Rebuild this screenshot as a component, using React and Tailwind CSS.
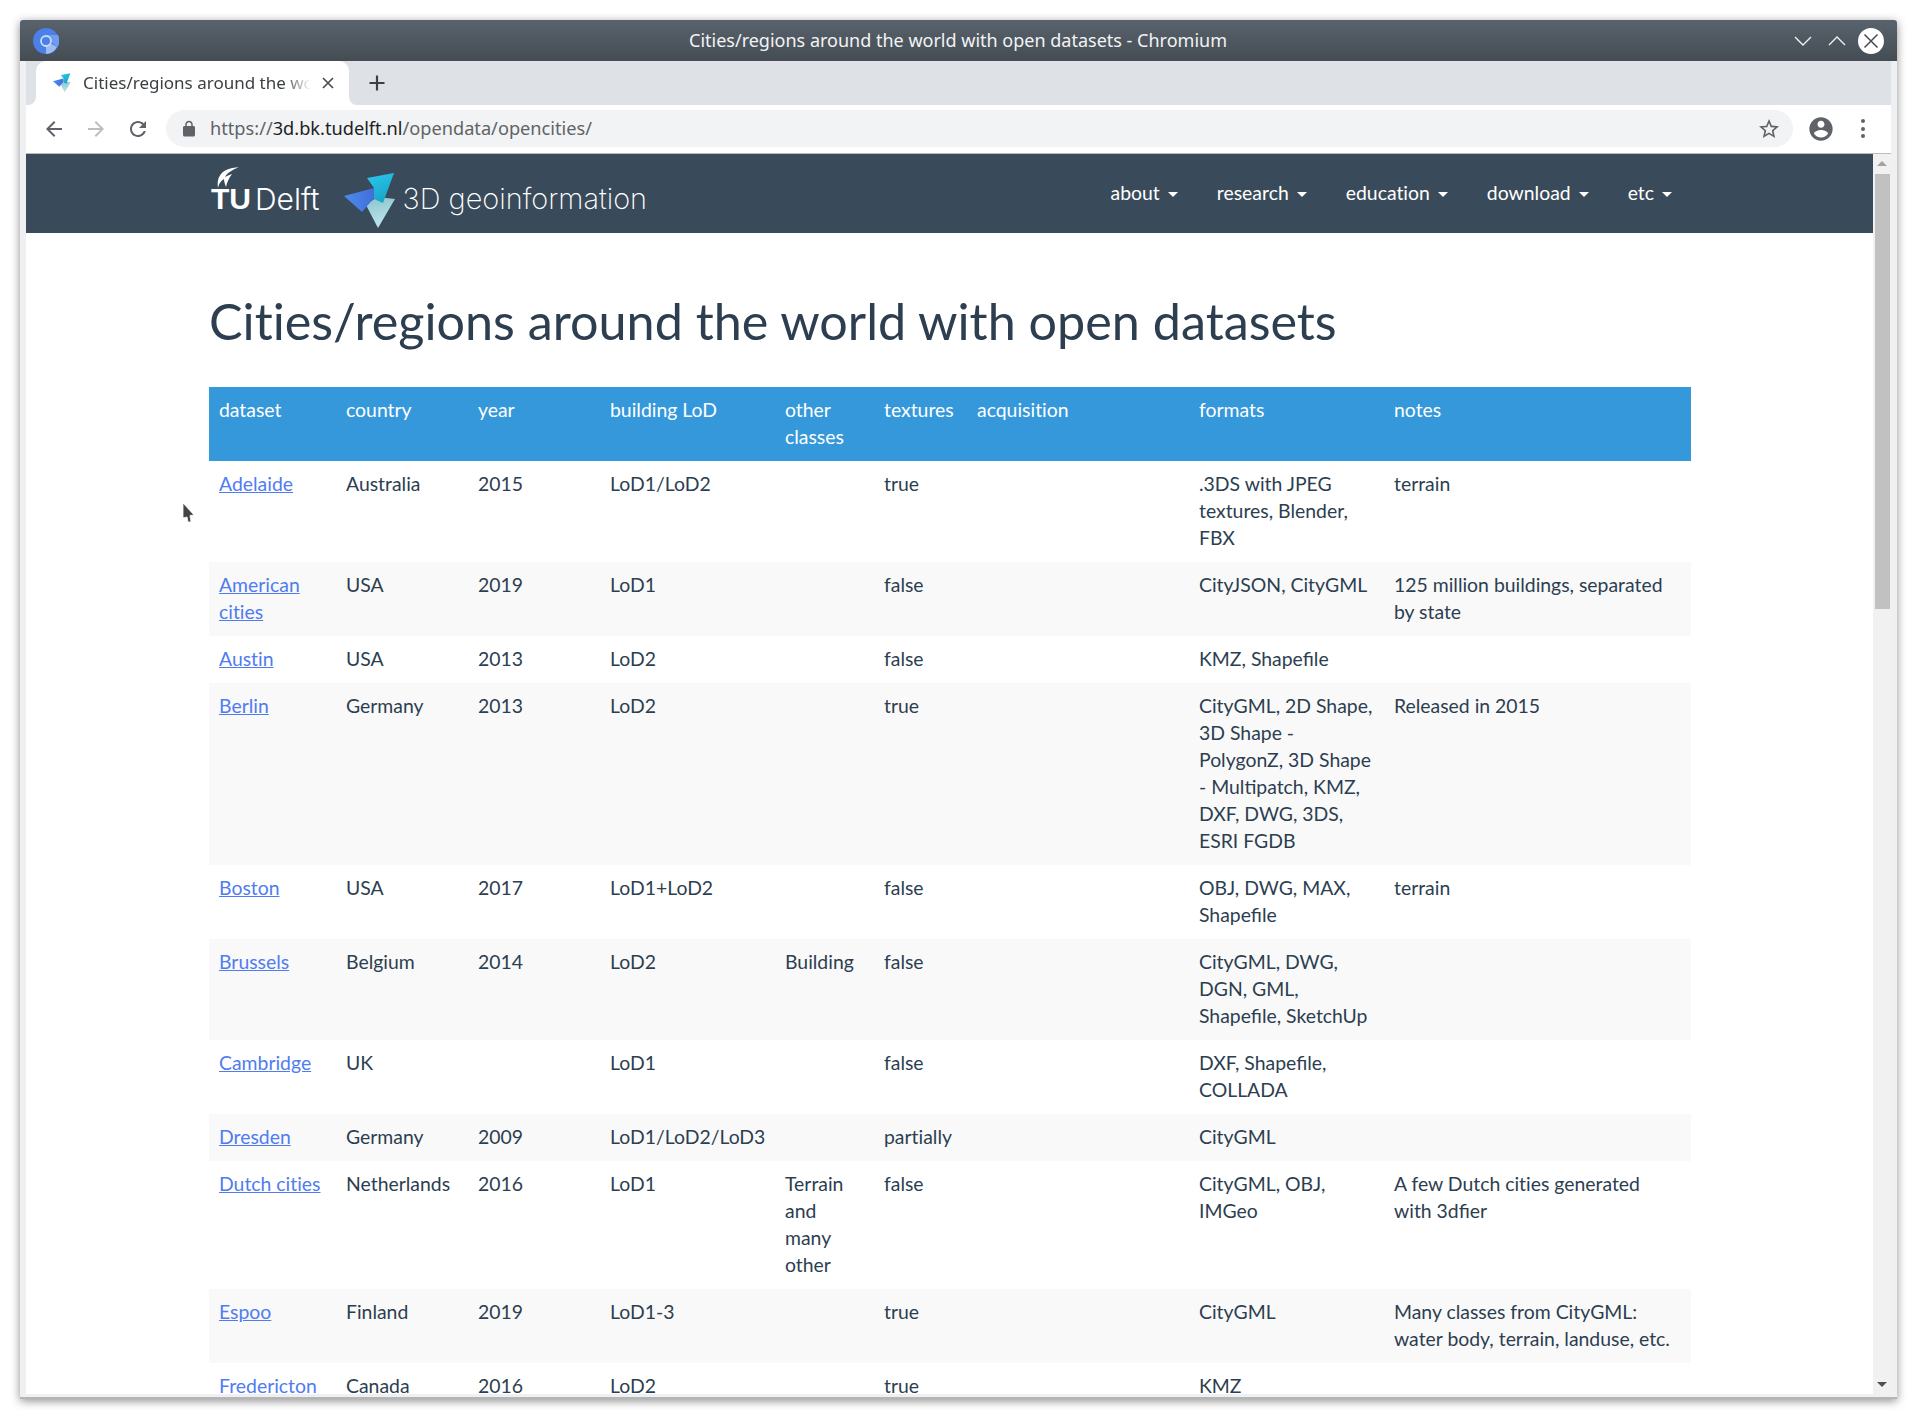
const columns = [127, 132, 132, 175, 99, 93, 222, 195, 307];

const headers = ["dataset", "country", "year", "building LoD", "other classes", "textures", "acquisition", "formats", "notes"];

const rows = [
  ["Adelaide", "Australia", "2015", "LoD1/LoD2", "", "true", "", ".3DS with JPEG textures, Blender, FBX", "terrain"],
  ["American cities", "USA", "2019", "LoD1", "", "false", "", "CityJSON, CityGML", "125 million buildings, separated by state"],
  ["Austin", "USA", "2013", "LoD2", "", "false", "", "KMZ, Shapefile", ""],
  ["Berlin", "Germany", "2013", "LoD2", "", "true", "", "CityGML, 2D Shape, 3D Shape - PolygonZ, 3D Shape - Multipatch, KMZ, DXF, DWG, 3DS, ESRI FGDB", "Released in 2015"],
  ["Boston", "USA", "2017", "LoD1+LoD2", "", "false", "", "OBJ, DWG, MAX, Shapefile", "terrain"],
  ["Brussels", "Belgium", "2014", "LoD2", "Building", "false", "", "CityGML, DWG, DGN, GML, Shapefile, SketchUp", ""],
  ["Cambridge", "UK", "", "LoD1", "", "false", "", "DXF, Shapefile, COLLADA", ""],
  ["Dresden", "Germany", "2009", "LoD1/LoD2/LoD3", "", "partially", "", "CityGML", ""],
  ["Dutch cities", "Netherlands", "2016", "LoD1", "Terrain and many other", "false", "", "CityGML, OBJ, IMGeo", <>A few Dutch cities generated with 3d<span className="[font-variant-ligatures:normal]">fier</span></>],
  ["Espoo", "Finland", "2019", "LoD1-3", "", "true", "", "CityGML", "Many classes from CityGML: water body, terrain, landuse, etc."],
  ["Fredericton", "Canada", "2016", "LoD2", "", "true", "", "KMZ", ""],
];

const navItems = ["about", "research", "education", "download", "etc"];

function MaterialIcon({ d, className }) {
  return (
    <svg viewBox="0 0 24 24" className={className} fill="currentColor">
      <path d={d} />
    </svg>
  );
}

function ChromiumIcon() {
  return (
    <svg viewBox="0 0 26 26" className="w-[26px] h-[26px] shrink-0">
      <circle cx="13" cy="13" r="13" fill="#4a80e8" />
      <path d="M13 13 L24 19 A13 13 0 0 1 13 26 Z" fill="#9dbcf2" />
      <path d="M13 7 H25 A13 13 0 0 1 24.2 19.5 L18 13 Z" fill="#6f9cee" />
      <circle cx="13" cy="13" r="5" fill="#4a80e8" stroke="#c9dbfa" strokeWidth="1.8" />
    </svg>
  );
}

function GeoLogo({ className, id }) {
  return (
    <svg viewBox="0 0 52 56" className={className}>
      <defs>
        <linearGradient id={`${id}a`} x1="0.2" y1="0" x2="0.7" y2="1">
          <stop offset="0" stopColor="#2bc5ee" />
          <stop offset="1" stopColor="#17a3c4" />
        </linearGradient>
        <linearGradient id={`${id}b`} x1="0" y1="0.5" x2="1" y2="0.4">
          <stop offset="0" stopColor="#4f8aec" />
          <stop offset="1" stopColor="#3f6fdc" />
        </linearGradient>
        <linearGradient id={`${id}c`} x1="0.4" y1="0" x2="0.6" y2="1">
          <stop offset="0" stopColor="#8fc6cf" />
          <stop offset="1" stopColor="#bfe8ef" />
        </linearGradient>
      </defs>
      <path d="M22 32 L33 24 L51 26 L34 55 Z" fill={`url(#${id}c)`} />
      <path d="M0 23 L30 15 L30 25 L18 39 Z" fill={`url(#${id}b)`} />
      <path d="M23 5 L50 0 L39 30 L30 26 L30 15 Z" fill={`url(#${id}a)`} />
    </svg>
  );
}

function Flame() {
  return (
    <svg viewBox="0 0 24 22" className="absolute left-[5px] top-[-17px] w-[24px] h-[22px]" fill="#ffffff">
      <path d="M23 0 C16 1 9 2 5 7 C2 11 1 15 2 21 C3 16 5 14 8 12 C8 15 9 17 10 20 C11 15 13 11 16 7 C13 8 11 9 9 10 C11 6 16 3 23 0 Z" />
    </svg>
  );
}

function Cursor() {
  return (
    <svg viewBox="0 0 14 22" className="absolute left-[156px] top-[348px] w-[14px] h-[22px]">
      <path d="M1 1 L12 13 L8 13.5 L9 20 L6 20 L5 15 L1 16 Z" fill="#454545" stroke="#ffffff" strokeWidth="0.8" />
    </svg>
  );
}

export default function App() {
  return (
    <div className="w-[1917px] h-[1420px] bg-white pt-[20px] pl-[20px] overflow-hidden">
      <div className="w-[1877px] h-[1379px] flex flex-col bg-[#eff0f1] rounded-t-[3px] shadow-[0_2px_10px_rgba(0,0,0,0.45)] border-b-[2px] border-b-[#b5b5b5] overflow-hidden">
        {/* title bar */}
        <div className="h-[41px] shrink-0 flex items-center relative px-[13px] bg-gradient-to-b from-[#59636d] to-[#444c53]">
          <ChromiumIcon />
          <div className="flex-1 text-center text-[18px] text-[#f2f3f4] pl-[63px] font-['Noto_Sans',sans-serif]">
            Cities/regions around the world with open datasets - Chromium
          </div>
          <div className="flex items-center">
            <svg viewBox="0 0 18 12" className="w-[18px] h-[12px] mr-[16px]" fill="none" stroke="#f0f0f0" strokeWidth="1.4">
              <path d="M1 2 L9 10 L17 2" />
            </svg>
            <svg viewBox="0 0 18 12" className="w-[18px] h-[12px] mr-[12px]" fill="none" stroke="#f0f0f0" strokeWidth="1.4">
              <path d="M1 10 L9 2 L17 10" />
            </svg>
            <svg viewBox="0 0 26 26" className="w-[26px] h-[26px]">
              <circle cx="13" cy="13" r="13" fill="#ffffff" />
              <path d="M6.5 6.5 L19.5 19.5 M19.5 6.5 L6.5 19.5" stroke="#444c53" strokeWidth="1.5" />
            </svg>
          </div>
        </div>

        {/* tab strip */}
        <div className="h-[44px] shrink-0 mx-[6px] bg-[#dee1e6] flex items-center">
          <div className="w-[10px] h-[44px] shrink-0 bg-white">
            <div className="h-full bg-[#dee1e6] rounded-br-[8px]" />
          </div>
          <div className="w-[313px] h-[44px] shrink-0 bg-white rounded-t-[10px] flex items-center pl-[17px] pr-[15px] font-['Noto_Sans',sans-serif]">
            <GeoLogo id="fav" className="w-[18px] h-[20px] shrink-0" />
            <div className="ml-[12px] w-[228px] overflow-hidden whitespace-nowrap text-[17px] text-[#3c4043] [mask-image:linear-gradient(to_right,black_88%,transparent)]">
              Cities/regions around the world with open datasets
            </div>
            <svg viewBox="0 0 12 12" className="ml-auto w-[12px] h-[12px]" fill="none" stroke="#4a4d51" strokeWidth="1.7">
              <path d="M1 1 L11 11 M11 1 L1 11" />
            </svg>
          </div>
          <div className="flex-1 h-[44px] bg-white">
            <div className="h-full bg-[#dee1e6] rounded-bl-[8px] flex items-center pl-[20px]">
              <svg viewBox="0 0 16 16" className="w-[16px] h-[16px]" fill="none" stroke="#3c4043" strokeWidth="2.2">
                <path d="M8 0.5 V15.5 M0.5 8 H15.5" />
              </svg>
            </div>
          </div>
        </div>

        {/* toolbar */}
        <div className="h-[49px] shrink-0 mx-[6px] bg-white border-b border-b-[#bcbcbc] flex items-center pb-[1px] font-['Noto_Sans',sans-serif]">
          <div className="flex items-center pl-[16px] gap-[18px] text-[#5f6368]">
            <MaterialIcon className="w-[24px] h-[24px]" d="M20 11H7.83l5.59-5.59L12 4l-8 8 8 8 1.41-1.41L7.83 13H20v-2z" />
            <MaterialIcon className="w-[24px] h-[24px] text-[#bcbec0]" d="M12 4l-1.41 1.41L16.17 11H4v2h12.17l-5.58 5.59L12 20l8-8z" />
            <MaterialIcon className="w-[24px] h-[24px]" d="M17.65 6.35C16.2 4.9 14.21 4 12 4c-4.42 0-7.99 3.58-7.99 8s3.57 8 7.99 8c3.73 0 6.84-2.55 7.73-6h-2.08c-.82 2.33-3.04 4-5.65 4-3.31 0-6-2.69-6-6s2.69-6 6-6c1.66 0 3.14.69 4.22 1.78L13 11h7V4l-2.35 2.35z" />
          </div>
          <div className="ml-[16px] w-[1627px] h-[37px] rounded-full bg-[#f1f3f4] flex items-center pl-[14px] pr-[12px]">
            <MaterialIcon className="w-[18px] h-[18px] text-[#5f6368]" d="M18 8h-1V6c0-2.76-2.24-5-5-5S7 3.24 7 6v2H6c-1.1 0-2 .9-2 2v10c0 1.1.9 2 2 2h12c1.1 0 2-.9 2-2V10c0-1.1-.9-2-2-2zM9 6c0-1.66 1.34-3 3-3s3 1.34 3 3v2H9V6z" />
            <div className="ml-[12px] text-[18.2px] text-[#5f6368] whitespace-nowrap">
              https://<span className="text-[#202124]">3d.bk.tudelft.nl</span>/opendata/opencities/
            </div>
            <MaterialIcon className="ml-auto w-[24px] h-[24px] text-[#5f6368]" d="M22 9.24l-7.19-.62L12 2 9.19 8.63 2 9.24l5.46 4.73L5.82 21 12 17.27 18.18 21l-1.63-7.03L22 9.24zM12 15.4l-3.76 2.27 1-4.28-3.32-2.88 4.38-.38L12 6.1l1.71 4.04 4.38.38-3.32 2.88 1 4.28L12 15.4z" />
          </div>
          <MaterialIcon className="ml-[14px] w-[28px] h-[28px] text-[#5f6368]" d="M12 2C6.48 2 2 6.48 2 12s4.48 10 10 10 10-4.48 10-10S17.52 2 12 2zm0 3c1.66 0 3 1.34 3 3s-1.34 3-3 3-3-1.34-3-3 1.34-3 3-3zm0 14.2c-2.5 0-4.71-1.28-6-3.22.03-1.99 4-3.08 6-3.08 1.99 0 5.97 1.09 6 3.08-1.29 1.94-3.5 3.22-6 3.22z" />
          <div className="ml-[26px] flex flex-col gap-[3.5px]">
            <span className="w-[4px] h-[4px] rounded-full bg-[#5f6368]" />
            <span className="w-[4px] h-[4px] rounded-full bg-[#5f6368]" />
            <span className="w-[4px] h-[4px] rounded-full bg-[#5f6368]" />
          </div>
        </div>

        {/* page + scrollbar */}
        <div className="flex mx-[6px] h-[1240px] shrink-0">
          <div className="relative w-[1847px] h-[1240px] bg-white overflow-hidden font-['Lato',sans-serif] text-[19.4px] leading-[27px] text-[#2c3e50] [font-variant-ligatures:none]">
            <nav className="h-[79px] bg-[#394a5a] flex items-center pl-[185px] pr-[201px] text-white">
              <div className="flex items-center mt-[11px]">
                <div className="flex items-end text-white leading-none">
                  <div className="relative font-['Liberation_Sans',sans-serif] text-[30px] font-bold">
                    <Flame />
                    TU
                  </div>
                  <div className="ml-[4px] font-['Inter',sans-serif] text-[30px] font-light">Delft</div>
                </div>
                <GeoLogo id="nav" className="ml-[24px] mt-[4px] w-[52px] h-[56px] shrink-0" />
                <div className="ml-[7px] mt-[-2px] font-['Inter',sans-serif] text-[28.9px] font-extralight whitespace-nowrap">3D geoinformation</div>
              </div>
              <div className="ml-auto flex items-center gap-[39px] text-[19.4px] mt-[-2px]">
                {navItems.map((item) => (
                  <div key={item} className="flex items-center gap-[8px]">
                    {item}
                    <span className="mt-[3px] border-t-[5px] border-t-white border-x-[5px] border-x-transparent" />
                  </div>
                ))}
              </div>
            </nav>

            <main className="pl-[183px] pr-[182px]">
              <h1 className="pt-[58px] pb-[36px] text-[50.3px] leading-[60px] font-normal">
                Cities/regions around the world with open datasets
              </h1>
              <table className="w-[1482px] table-fixed border-collapse">
                <colgroup>
                  {columns.map((w, i) => (
                    <col key={i} style={{ width: w }} />
                  ))}
                </colgroup>
                <thead>
                  <tr className="bg-[#3498db] text-white">
                    {headers.map((h) => (
                      <th key={h} className="pt-[9px] pb-[11px] px-[10px] text-left align-top font-normal">{h}</th>
                    ))}
                  </tr>
                </thead>
                <tbody>
                  {rows.map((row, i) => (
                    <tr key={row[0]} className={i % 2 === 1 ? "bg-[#f9f9f9]" : "bg-white"}>
                      {row.map((cell, j) => (
                        <td key={j} className={j === 7 ? "pt-[9px] pb-[11px] px-[10px] align-top [font-variant-ligatures:normal]" : "pt-[9px] pb-[11px] px-[10px] align-top"}>
                          {j === 0 ? <a href="#" className="text-[#4f7cf0] underline">{cell}</a> : cell}
                        </td>
                      ))}
                    </tr>
                  ))}
                </tbody>
              </table>
            </main>
            <Cursor />
          </div>

          {/* scrollbar */}
          <div className="w-[18px] h-[1240px] bg-[#f1f1f1] flex flex-col items-center">
            <span className="mt-[7px] border-b-[5px] border-b-[#a3a3a3] border-x-[5px] border-x-transparent" />
            <div className="mt-[8px] w-[15px] h-[435px] bg-[#c1c1c1]" />
            <span className="mt-auto mb-[7px] border-t-[5px] border-t-[#505050] border-x-[5px] border-x-transparent" />
          </div>
        </div>
      </div>
    </div>
  );
}
